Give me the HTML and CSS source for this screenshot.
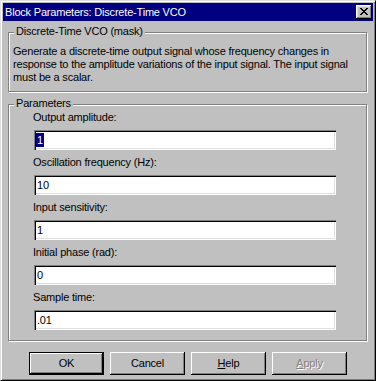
FILE: index.html
```html
<!DOCTYPE html>
<html>
<head>
<meta charset="utf-8">
<link rel="stylesheet" href="styles.css">
</head>
<body>
<div class="window">
  <div class="titlebar">
    <span class="title">Block Parameters: Discrete-Time VCO</span>
    <button class="close" aria-label="Close"><svg width="8" height="7" viewBox="0 0 8 7" shape-rendering="crispEdges"><path fill="#000" d="M0 0h2v1H0z M6 0h2v1H6z M1 1h2v1H1z M5 1h2v1H5z M2 2h4v1H2z M3 3h2v1H3z M2 4h4v1H2z M1 5h2v1H1z M5 5h2v1H5z M0 6h2v1H0z M6 6h2v1H6z"/></svg></button>
  </div>
  <div class="group g1">
    <span class="legend">Discrete-Time VCO (mask)</span>
    <p class="desc">Generate a discrete-time output signal whose frequency changes in<br>response to the amplitude variations of the input signal. The input signal<br>must be a scalar.</p>
  </div>
  <div class="group g2">
    <span class="legend">Parameters</span>
    <div class="fields">
      <div class="field"><div class="label">Output amplitude:</div><div class="edit"><span class="sel">1</span></div></div>
      <div class="field"><div class="label">Oscillation frequency (Hz):</div><div class="edit">10</div></div>
      <div class="field"><div class="label">Input sensitivity:</div><div class="edit">1</div></div>
      <div class="field"><div class="label">Initial phase (rad):</div><div class="edit">0</div></div>
      <div class="field"><div class="label">Sample time:</div><div class="edit">.01</div></div>
    </div>
  </div>
  <div class="buttons">
    <button class="btn default">OK</button>
    <button class="btn">Cancel</button>
    <button class="btn"><u>H</u>elp</button>
    <button class="btn disabled"><u>A</u>pply</button>
  </div>
</div>
</body>
</html>
```
FILE: styles.css
```css
* { box-sizing: border-box; }
html, body { margin: 0; padding: 0; background: #c0c0c0; }
body {
  font-family: "Liberation Sans", Arial, sans-serif;
  font-size: 11px;
  line-height: 13px;
  letter-spacing: -0.2px;
  color: #000;
}
.window {
  width: 376px;
  height: 381px;
  background: #c0c0c0;
  border: 1px solid;
  border-color: #dfdfdf #000 #000 #dfdfdf;
  box-shadow: inset 1px 1px #fff, inset -1px -1px #808080;
  padding: 2px;
  display: flex;
  flex-direction: column;
}
.titlebar {
  height: 18px;
  background: #000080;
  color: #fff;
  display: flex;
  align-items: center;
  justify-content: space-between;
  padding: 0 1px 0 2px;
}
.title { line-height: 18px; }
.close {
  width: 16px;
  height: 14px;
  padding: 0;
  margin: 0;
  border: none;
  background: #c0c0c0;
  box-shadow: inset -1px -1px #000, inset 1px 1px #fff, inset -2px -2px #808080, inset 2px 2px #dfdfdf;
  display: flex;
  align-items: flex-start;
  justify-content: flex-start;
  padding: 3px 0 0 4px;
}
.close svg { display: block; }
.group {
  position: relative;
  margin-left: 5px;
  width: 359px;
  border: 1px solid #808080;
  box-shadow: inset 1px 1px #fff, 1px 1px #fff;
}
.legend {
  position: absolute;
  top: -8px;
  left: 5px;
  padding: 0 2px;
  background: #c0c0c0;
  white-space: nowrap;
}
.g1 {
  margin-top: 11px;
  height: 60px;
  padding: 12px 4px 0 4px;
}
.desc { margin: 0; white-space: nowrap; }
.g2 {
  margin-top: 12px;
  height: 237px;
  padding: 6px 0 0 24px;
}
.fields { display: flex; flex-direction: column; gap: 6px; }
.field { display: flex; flex-direction: column; gap: 6px; }
.edit {
  margin-left: 1px;
  width: 302px;
  height: 20px;
  background: #fff;
  box-shadow: inset 1px 1px #808080, inset 2px 2px #000, inset -1px -1px #fff, inset -2px -2px #dfdfdf;
  padding: 3px 3px 0 3px;
  line-height: 14px;
}
.sel { background: #000080; color: #fff; display: inline-block; padding: 0 1px; margin-left: -1px; }
.buttons {
  margin-top: 11px;
  padding-left: 26px;
  display: flex;
  gap: 6px;
}
.btn {
  width: 75px;
  height: 23px;
  margin: 0;
  padding: 0;
  border: none;
  background: #c0c0c0;
  font: inherit;
  letter-spacing: inherit;
  color: #000;
  box-shadow: inset -1px -1px #000, inset 1px 1px #fff, inset -2px -2px #808080;
}
.btn.default {
  box-shadow: inset 0 0 0 1px #000, inset -2px -2px #000, inset 2px 2px #fff, inset -3px -3px #808080;
}
.btn.disabled { color: #808080; text-shadow: 1px 1px #fff; }
.btn u { text-decoration: underline; }
```
